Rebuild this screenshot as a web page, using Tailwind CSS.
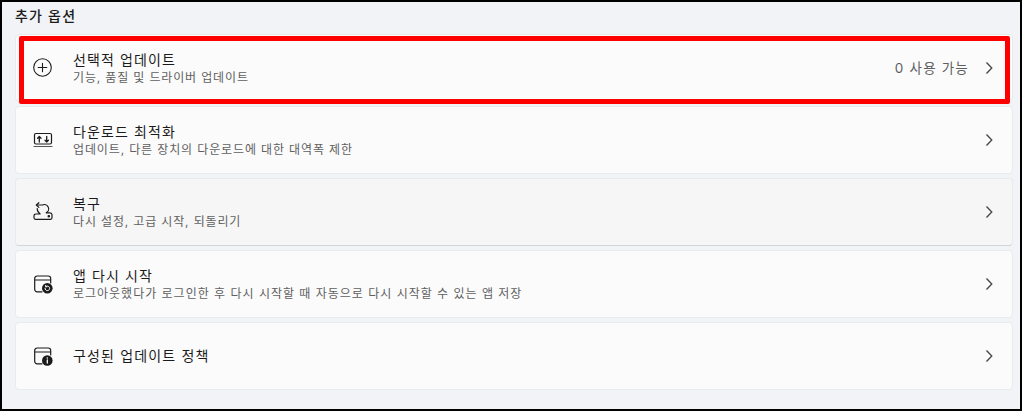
<!DOCTYPE html>
<html>
<head>
  <meta charset="utf-8">
  <script src="https://cdn.jsdelivr.net/npm/@tailwindcss/browser@4"></script>
</head>
<body class="m-0 overflow-hidden bg-black">
  <main class="relative h-[411px] w-[1022px] overflow-hidden border-2 border-black bg-[#f1f3f6] font-['Inter','Noto_Sans_CJK_KR',sans-serif] text-[#1b1b1b]">
    <h2 class="ml-[13px] mt-[4px] h-[28px] text-[14px] font-medium leading-[20px] tracking-[1.2px]">추가 옵션</h2>

    <div class="ml-[13px] mr-[7px] flex flex-col gap-[4px]">
      <!-- 선택적 업데이트 -->
      <div class="flex h-[68px] items-center rounded-[4px] border border-[#e9eaec] bg-[#fbfbfc] pl-[17px] pr-[17px]">
        <svg class="h-[20px] w-[20px] shrink-0" viewBox="0 0 20 20" fill="none" stroke="#1b1b1b" stroke-width="1.1" stroke-linecap="round">
          <circle cx="9.500" cy="9.500" r="8.800"/>
          <path d="M9.500 5.200v8.600M5.200 9.500h8.600"/>
        </svg>
        <div class="ml-[20px] flex-1">
          <p class="text-[14px] leading-[18px] tracking-[1.1px]">선택적 업데이트</p>
          <p class="mt-[1px] text-[12px] leading-[16px] tracking-[.85px] text-[#5f5f5f]">기능, 품질 및 드라이버 업데이트</p>
        </div>
        <span class="mr-[14px] text-[13.5px] tracking-[1.2px] text-[#5f5f5f]">0 사용 가능</span>
        <svg class="h-[12px] w-[12px] shrink-0" viewBox="0 0 12 12" fill="none" stroke="#444" stroke-width="1.3"><path d="M3.500 .500l5.300 5.500-5.300 5.500"/></svg>
      </div>

      <!-- 다운로드 최적화 -->
      <div class="flex h-[68px] items-center rounded-[4px] border border-[#e9eaec] bg-[#fbfbfc] pl-[17px] pr-[17px]">
        <svg class="h-[20px] w-[20px] shrink-0" viewBox="0 0 20 20" fill="none" stroke="#1b1b1b" stroke-width="1.2" stroke-linecap="round" stroke-linejoin="round">
          <rect x="1.500" y="3.500" width="17" height="10.500" rx="1.500"/>
          <path d="M1 16.500h18" stroke="#555"/>
          <path d="M6.300 12v-5.500M4.600 8.200l1.700-1.700L8 8.200M13.700 6.500V12M12 10.300l1.700 1.700 1.700-1.700" stroke-width="1.300"/>
        </svg>
        <div class="ml-[20px] flex-1">
          <p class="text-[14px] leading-[18px] tracking-[1.1px]">다운로드 최적화</p>
          <p class="mt-[1px] text-[12px] leading-[16px] tracking-[.87px] text-[#5f5f5f]">업데이트, 다른 장치의 다운로드에 대한 대역폭 제한</p>
        </div>
        <svg class="h-[12px] w-[12px] shrink-0" viewBox="0 0 12 12" fill="none" stroke="#444" stroke-width="1.3"><path d="M3.500 .500l5.300 5.500-5.300 5.500"/></svg>
      </div>

      <!-- 복구 -->
      <div class="flex h-[68px] items-center rounded-[4px] border border-[#e9eaec] border-b-[#d4d5d7] bg-[#f6f6f7] pl-[17px] pr-[17px]">
        <svg class="h-[20px] w-[20px] shrink-0" viewBox="0 0 20 20" fill="none" stroke="#1b1b1b" stroke-width="1.2" stroke-linecap="round" stroke-linejoin="round">
          <path d="M5.800 .700L3.400 3l2.400 2.400"/>
          <path d="M3.400 3h6.100a4.200 4.200 0 0 1 3.700 7.700"/>
          <path d="M4.200 6.500c0 2.300 1 4.200 3 5.500H2.800A1.800 1.800 0 0 0 1 13.800v2A1.500 1.500 0 0 0 2.500 17.300h15a1.500 1.500 0 0 0 1.500-1.500v-2.800a2.200 2.200 0 0 0-2.200-2.200h-3.300"/>
          <circle cx="15.800" cy="14.300" r=".7" fill="#1b1b1b"/>
        </svg>
        <div class="ml-[20px] flex-1">
          <p class="text-[14px] leading-[18px] tracking-[1.1px]">복구</p>
          <p class="mt-[1px] text-[12px] leading-[16px] tracking-[.85px] text-[#5f5f5f]">다시 설정, 고급 시작, 되돌리기</p>
        </div>
        <svg class="h-[12px] w-[12px] shrink-0" viewBox="0 0 12 12" fill="none" stroke="#444" stroke-width="1.3"><path d="M3.500 .500l5.300 5.500-5.300 5.500"/></svg>
      </div>

      <!-- 앱 다시 시작 -->
      <div class="flex h-[68px] items-center rounded-[4px] border border-[#e9eaec] bg-[#fbfbfc] pl-[17px] pr-[17px]">
        <svg class="h-[20px] w-[20px] shrink-0" viewBox="0 0 20 20" fill="none" stroke="#1b1b1b" stroke-width="1.2" stroke-linecap="round">
          <path d="M9 17.800H4.200a2.500 2.500 0 0 1-2.500-2.500V4.500A2.500 2.500 0 0 1 4.200 2h11a2.500 2.500 0 0 1 2.500 2.500V9M1.700 6h16"/>
          <circle cx="14.300" cy="14.300" r="5.300" fill="#1b1b1b" stroke="none"/>
          <path d="M12 14.300a2.300 2.300 0 1 0 .8-1.700M12.600 11.500v1.300h1.300" stroke="#fbfbfc" stroke-width="1"/>
        </svg>
        <div class="ml-[20px] flex-1">
          <p class="text-[14px] leading-[18px] tracking-[1.1px]">앱 다시 시작</p>
          <p class="mt-[1px] text-[12px] leading-[16px] tracking-[.99px] text-[#5f5f5f]">로그아웃했다가 로그인한 후 다시 시작할 때 자동으로 다시 시작할 수 있는 앱 저장</p>
        </div>
        <svg class="h-[12px] w-[12px] shrink-0" viewBox="0 0 12 12" fill="none" stroke="#444" stroke-width="1.3"><path d="M3.500 .500l5.300 5.500-5.300 5.500"/></svg>
      </div>

      <!-- 구성된 업데이트 정책 -->
      <div class="flex h-[68px] items-center rounded-[4px] border border-[#e9eaec] bg-[#fbfbfc] pl-[17px] pr-[17px]">
        <svg class="h-[20px] w-[20px] shrink-0" viewBox="0 0 20 20" fill="none" stroke="#1b1b1b" stroke-width="1.2" stroke-linecap="round">
          <path d="M9 17.800H4.200a2.500 2.500 0 0 1-2.500-2.500V4.500A2.500 2.500 0 0 1 4.200 2h11a2.500 2.500 0 0 1 2.500 2.500V9M1.700 6h16"/>
          <circle cx="14.300" cy="14.500" r="5.300" fill="#1b1b1b" stroke="none"/>
          <path d="M14.300 14v3" stroke="#fbfbfc" stroke-width="1.300"/>
          <circle cx="14.300" cy="12" r=".8" fill="#fbfbfc" stroke="none"/>
        </svg>
        <p class="ml-[20px] flex-1 text-[14px] leading-[18px] tracking-[1.15px]">구성된 업데이트 정책</p>
        <svg class="h-[12px] w-[12px] shrink-0" viewBox="0 0 12 12" fill="none" stroke="#444" stroke-width="1.3"><path d="M3.500 .500l5.300 5.500-5.300 5.500"/></svg>
      </div>
    </div>

    <!-- annotation box drawn over the first row -->
    <div class="pointer-events-none absolute left-[17px] top-[34px] h-[68px] w-[991px] rounded-[2px] border-[5px] border-[#ff0000]"></div>
  </main>
</body>
</html>
